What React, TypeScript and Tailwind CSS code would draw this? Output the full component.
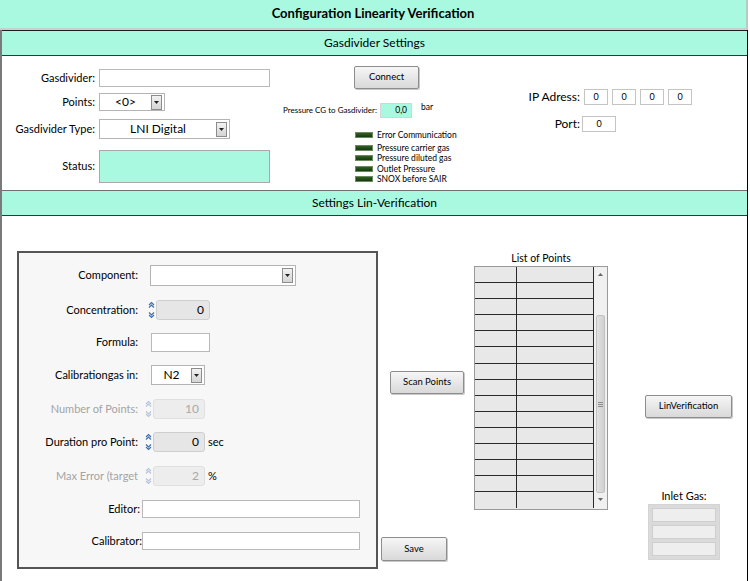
import React from 'react';

const teal = 'bg-[#a9f9e1]';

function DropBtn() {
  return (
    <div className="w-[11px] h-[15px] border border-[#8c8c8c] bg-gradient-to-b from-[#f2f2f2] to-[#d4d4d4] flex items-center justify-center mr-[2px]">
      <svg width="5" height="3" viewBox="0 0 5 3">
        <path d="M0 0H5L2.5 3Z" fill="#222" />
      </svg>
    </div>
  );
}

function Select({ w, h, value, text = 'text-[13px]' }: { w: string; h: string; value?: string; text?: string }) {
  return (
    <div className={`${w} ${h} border border-[#b4b4b4] bg-white flex items-center`}>
      <div className={`flex-1 text-center ${text} text-black`}>{value}</div>
      <DropBtn />
    </div>
  );
}

function Btn({ label, w, h }: { label: string; w: string; h: string }) {
  return (
    <div className={`${w} ${h} border border-[#8d8d8d] rounded-[2px] bg-gradient-to-b from-[#f6f6f6] to-[#d9d9d9] flex items-center justify-center text-[9.5px] text-black shadow-[1px_1px_0_#c8c8c8]`}>
      {label}
    </div>
  );
}

function Spin({ value, disabled, w = 'w-[54px]', suffix }: { value: string; disabled?: boolean; w?: string; suffix?: string }) {
  const c = disabled ? '#b4c3d9' : '#3a6cad';
  return (
    <div className="flex items-center">
      <svg width="7" height="18" viewBox="0 0 7 18" className="mr-[1px]">
        <path d="M1 4L3.5 1.5L6 4M1 6.5L3.5 4L6 6.5" stroke={c} fill="none" strokeWidth="1.1" />
        <path d="M1 11.5L3.5 14L6 11.5M1 14L3.5 16.5L6 14" stroke={c} fill="none" strokeWidth="1.1" />
      </svg>
      <div
        className={`${w} h-[20px] rounded-[3px] border ${disabled ? 'border-[#e0e0e0] bg-[#ededed] text-[#a8a8a8]' : 'border-[#cfcfcf] bg-[#e6e6e6] text-black'} text-[12px] text-right pr-[5px] leading-[18px]`}
      >
        {value}
      </div>
      {suffix && <span className="ml-[3px] text-[11px] text-black">{suffix}</span>}
    </div>
  );
}

function Led({ label }: { label: string }) {
  return (
    <div className="flex items-center h-[10.5px]">
      <div className="w-[18px] h-[6px] bg-gradient-to-b from-[#2f5f22] to-[#173a0f] border border-[#6b8a60] mr-[4px]" />
      <span className="text-[8.5px] text-black leading-none">{label}</span>
    </div>
  );
}

function Header({ title, topBorder }: { title: string; topBorder: string }) {
  return (
    <div className={`h-[26px] ${teal} border-t ${topBorder} border-b border-b-[#2b3a36] flex items-center justify-center text-[12px] text-black`}>
      {title}
    </div>
  );
}

function GroupRow({ label, mt, h, disabled, children }: { label: string; mt: string; h: string; disabled?: boolean; children: React.ReactNode }) {
  return (
    <div className={`flex items-center ${mt} ${h}`}>
      <div className={`w-[119px] text-right text-[11px] ${disabled ? 'text-[#a4a4a4]' : 'text-black'}`}>{label}</div>
      <div className="ml-[12px]">{children}</div>
    </div>
  );
}

export default function App() {
  const rows = Array.from({ length: 15 });
  return (
    <div className="w-[750px] h-[581px] bg-white overflow-hidden font-['Lato','Open_Sans',sans-serif]">
      {/* title bar */}
      <div className={`h-[30px] w-[748px] ${teal} border-r-2 border-r-[#b9c9c4] border-b-2 border-b-[#c4d2ce] flex items-center justify-center`}>
        <span className="font-bold text-[13px] text-black">Configuration Linearity Verification</span>
      </div>

      <div className="w-[748px] border-l-2 border-l-[#7a7a7a] border-r border-r-black">
        <Header title="Gasdivider Settings" topBorder="border-t-[#1e1e1e]" />

        {/* Gasdivider panel */}
        <div className="h-[134px] bg-white flex">
          {/* left column */}
          <div className="w-[280px] flex flex-col pt-[13px]">
            <div className="flex items-center h-[18px]">
              <div className="w-[93px] text-right text-[11px]">Gasdivider:</div>
              <div className="ml-[4px] w-[171px] h-[18px] border border-[#b9b9b9] bg-white" />
            </div>
            <div className="flex items-center h-[18px] mt-[6px]">
              <div className="w-[93px] text-right text-[11px]">Points:</div>
              <div className="ml-[4px]">
                <Select w="w-[66px]" h="h-[18px]" value="<0>" text="text-[12px]" />
              </div>
            </div>
            <div className="flex items-center h-[20px] mt-[8px]">
              <div className="w-[93px] text-right text-[11px]">Gasdivider Type:</div>
              <div className="ml-[4px]">
                <Select w="w-[131px]" h="h-[20px]" value="LNI Digital" text="text-[12px]" />
              </div>
            </div>
            <div className="flex items-center h-[33px] mt-[11px]">
              <div className="w-[93px] text-right text-[11px]">Status:</div>
              <div className={`ml-[4px] w-[171px] h-[33px] border border-[#a9a9a9] ${teal}`} />
            </div>
          </div>

          {/* middle column */}
          <div className="w-[240px] flex flex-col pt-[10px]">
            <div className="ml-[72px]">
              <Btn label="Connect" w="w-[65px]" h="h-[23px]" />
            </div>
            <div className="flex items-center mt-[13px] ml-[1px] h-[16px]">
              <span className="text-[8px]">Pressure CG to Gasdivider:</span>
              <div className={`ml-[3px] w-[32px] h-[15px] border border-[#d4d4d4] ${teal} text-[8.5px] text-right pr-[4px] leading-[13px]`}>0,0</div>
              <span className="ml-[9px] text-[8.5px] -mt-[6px]">bar</span>
            </div>
            <div className="ml-[73px] mt-[12px] flex flex-col">
              <div className="mb-[2px]"><Led label="Error Communication" /></div>
              <Led label="Pressure carrier gas" />
              <Led label="Pressure diluted gas" />
              <Led label="Outlet Pressure" />
              <Led label="SNOX before SAIR" />
            </div>
          </div>

          {/* right column */}
          <div className="flex flex-col pt-[33px]">
            <div className="flex items-center h-[16px]">
              <span className="w-[58px] text-right text-[12px]">IP Adress:</span>
              <div className="flex gap-[4px] ml-[4px]">
                {['0', '0', '0', '0'].map((v, i) => (
                  <div key={i} className="w-[24px] h-[16px] border border-[#c4c4c4] text-[9px] text-center leading-[14px]">{v}</div>
                ))}
              </div>
            </div>
            <div className="flex items-center h-[16px] mt-[11px]">
              <span className="w-[58px] text-right text-[12px]">Port:</span>
              <div className="ml-[2px] w-[34px] h-[16px] border border-[#c4c4c4] text-[9px] text-center leading-[14px]">0</div>
            </div>
          </div>
        </div>

        <Header title="Settings Lin-Verification" topBorder="border-t-[#6f6f6f]" />

        {/* Lin verification panel */}
        <div className="h-[365px] bg-white flex">
          {/* group box */}
          <div className="ml-[15px] mt-[35px] w-[361px] h-[318px] border-2 border-[#555] bg-[#f7f7f7] flex flex-col">
            <GroupRow label="Component:" mt="mt-[12px]" h="h-[21px]">
              <Select w="w-[146px]" h="h-[21px]" />
            </GroupRow>
            <GroupRow label="Concentration:" mt="mt-[14px]" h="h-[20px]">
              <div className="-ml-[2px]"><Spin value="0" /></div>
            </GroupRow>
            <GroupRow label="Formula:" mt="mt-[13px]" h="h-[19px]">
              <div className="ml-[1px] w-[59px] h-[19px] border border-[#b9b9b9] bg-white" />
            </GroupRow>
            <GroupRow label="Calibrationgas in:" mt="mt-[13px]" h="h-[20px]">
              <div className="ml-[1px]">
                <Select w="w-[54px]" h="h-[20px]" value="N2" text="text-[12px]" />
              </div>
            </GroupRow>
            <GroupRow label="Number of Points:" mt="mt-[15px]" h="h-[18px]" disabled>
              <div className="-ml-[5px]"><Spin value="10" disabled w="w-[52px]" /></div>
            </GroupRow>
            <GroupRow label="Duration pro Point:" mt="mt-[14px]" h="h-[20px]">
              <div className="-ml-[5px]"><Spin value="0" w="w-[52px]" suffix="sec" /></div>
            </GroupRow>
            <GroupRow label="Max Error (target" mt="mt-[15px]" h="h-[18px]" disabled>
              <div className="-ml-[5px]"><Spin value="2" disabled w="w-[52px]" suffix="%" /></div>
            </GroupRow>
            <div className="flex items-center mt-[15px] h-[18px]">
              <div className="w-[121px] text-right text-[11px]">Editor:</div>
              <div className="ml-[2px] w-[218px] h-[18px] border border-[#b9b9b9] bg-white" />
            </div>
            <div className="flex items-center mt-[14px] h-[18px]">
              <div className="w-[123px] text-right text-[11px]">Calibrator:</div>
              <div className="w-[218px] h-[18px] border border-[#b9b9b9] bg-white" />
            </div>
          </div>

          {/* buttons column */}
          <div className="w-[96px] flex flex-col">
            <div className="ml-[12px] mt-[155px]">
              <Btn label="Scan Points" w="w-[74px]" h="h-[23px]" />
            </div>
            <div className="ml-[3px] mt-[143px]">
              <Btn label="Save" w="w-[66px]" h="h-[24px]" />
            </div>
          </div>

          {/* list of points */}
          <div className="flex flex-col mt-[36px]">
            <div className="text-center text-[10.5px] h-[15px] leading-[15px] -mt-[1px]">List of Points</div>
            <div className="w-[134px] h-[244px] border border-[#9a9a9a] flex bg-[#e8e8e8]">
              <div className="flex-1 flex flex-col">
                {rows.map((_, i) => (
                  <div key={i} className="flex h-[16.1px] border-b border-[#2a2a2a] last:border-b-0">
                    <div className="w-[42px] border-r border-[#2a2a2a] bg-[#e8e8e8]" />
                    <div className="flex-1 border-r border-[#2a2a2a] bg-[#e8e8e8]" />
                  </div>
                ))}
              </div>
              <div className="w-[13px] bg-[#f0f0f0] flex flex-col items-center">
                <svg width="5" height="3" viewBox="0 0 5 3" className="mt-[6px]">
                  <path d="M0 3H5L2.5 0Z" fill="#666" />
                </svg>
                <div className="mt-[39px] w-[9px] h-[178px] bg-gradient-to-r from-[#e2e2e2] to-[#d0d0d0] border border-[#c2c2c2] rounded-[2px] flex items-center justify-center">
                  <svg width="5" height="5" viewBox="0 0 5 5">
                    <path d="M0 0.5H5M0 2.5H5M0 4.5H5" stroke="#777" strokeWidth="0.8" />
                  </svg>
                </div>
                <svg width="5" height="3" viewBox="0 0 5 3" className="mt-[5px]">
                  <path d="M0 0H5L2.5 3Z" fill="#666" />
                </svg>
              </div>
            </div>
          </div>

          {/* right column */}
          <div className="flex flex-col ml-[37px]">
            <div className="mt-[179px]">
              <Btn label="LinVerification" w="w-[87px]" h="h-[23px]" />
            </div>
            <div className="mt-[70px] ml-[3px] w-[72px] flex flex-col items-center">
              <div className="text-[11px] h-[16px] leading-[16px]">Inlet Gas:</div>
              <div className="w-[72px] h-[56px] bg-[#dadada] border border-[#d4d4d4] p-[3px] flex flex-col gap-[3px]">
                <div className="flex-1 bg-[#eeeeee] border border-[#cfcfcf]" />
                <div className="flex-1 bg-[#eeeeee] border border-[#cfcfcf]" />
                <div className="flex-1 bg-[#eeeeee] border border-[#cfcfcf]" />
              </div>
            </div>
          </div>
        </div>
      </div>
    </div>
  );
}
